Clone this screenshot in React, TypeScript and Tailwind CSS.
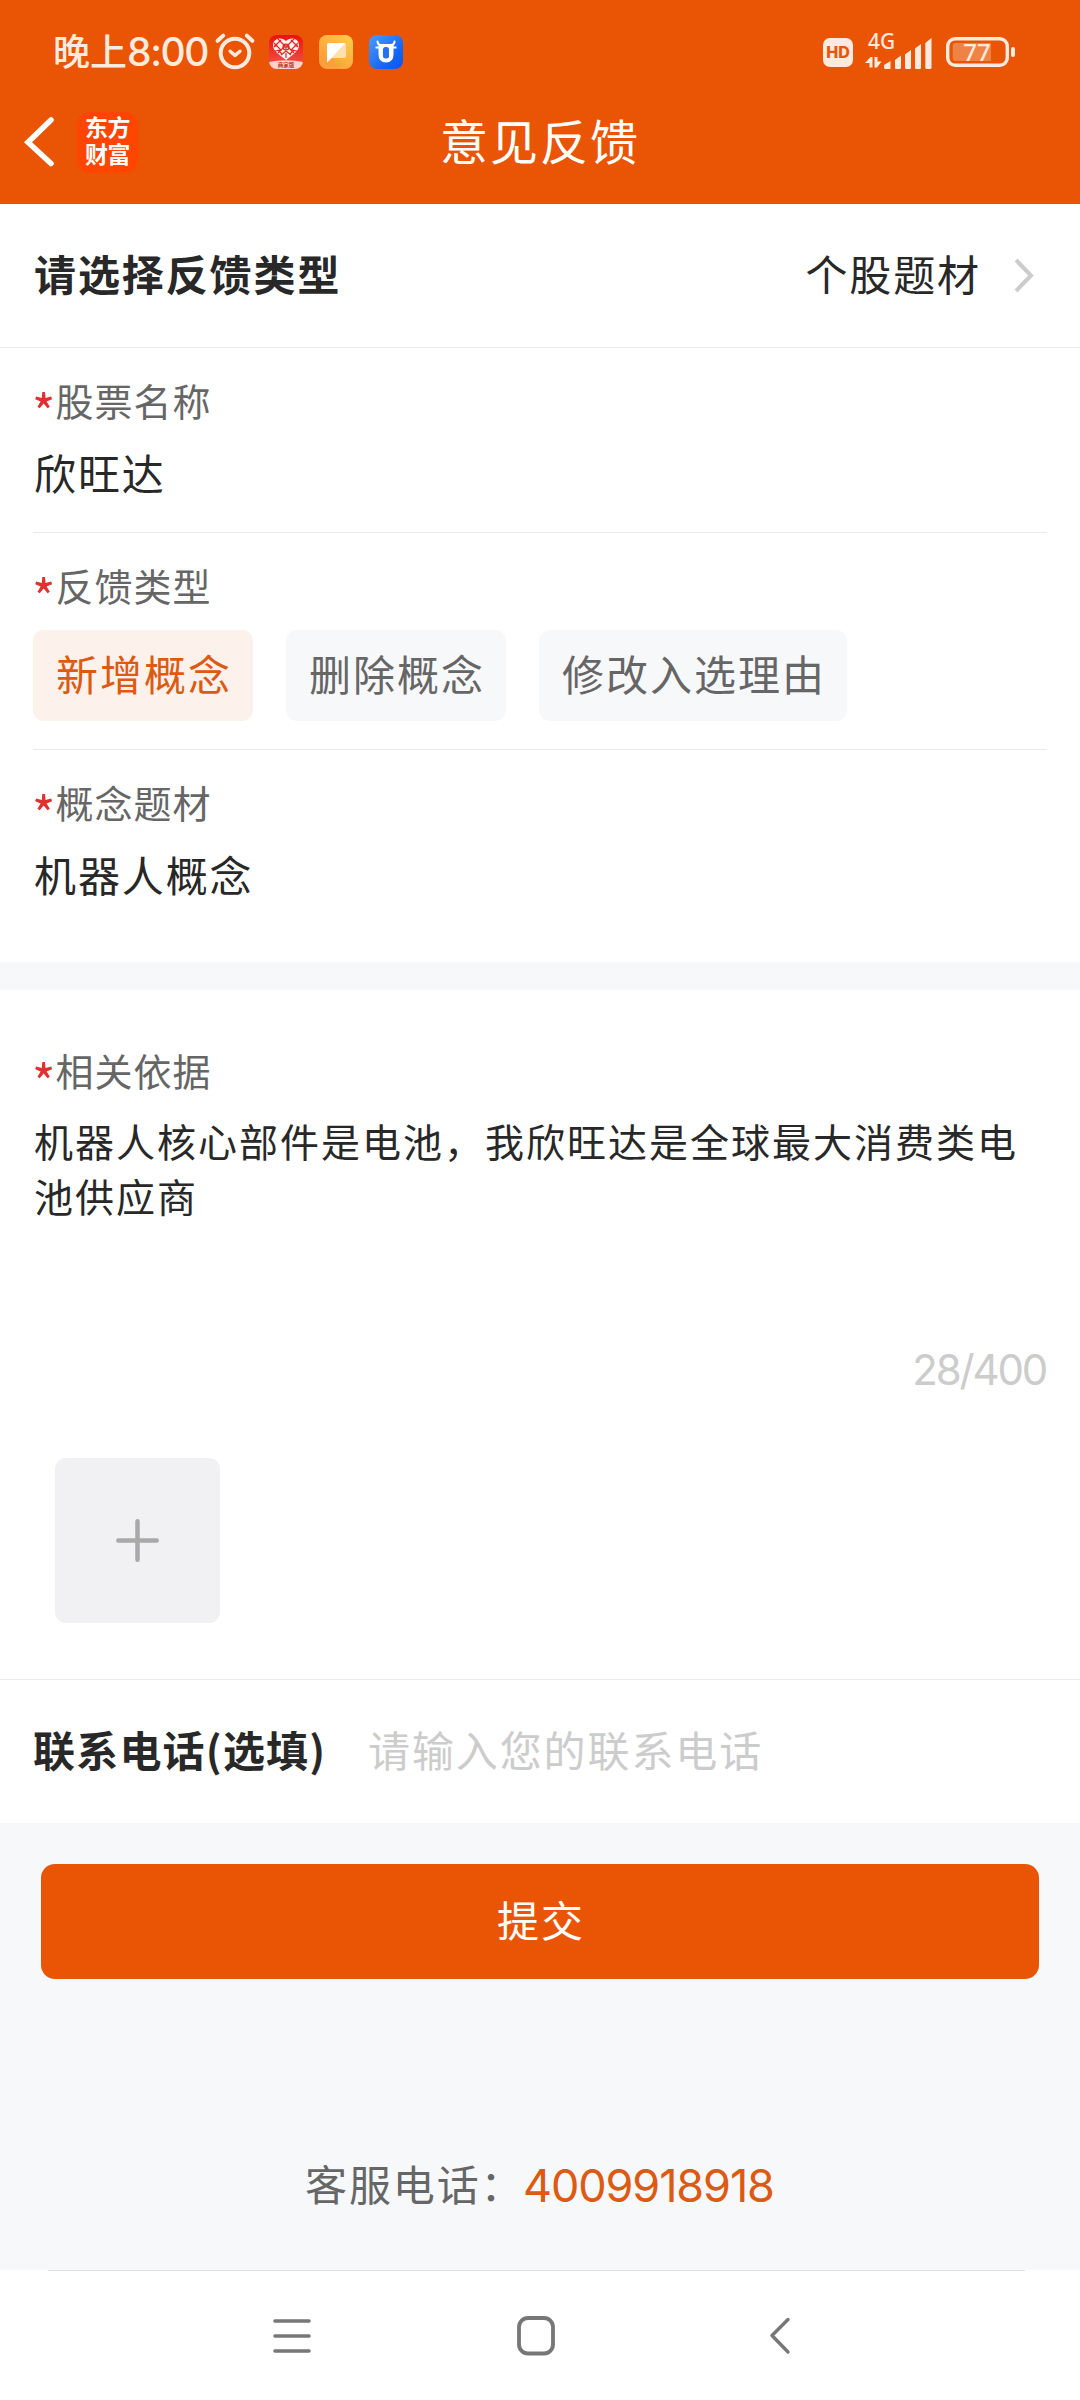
import React, { useState } from 'react';

const chips = ['新增概念', '删除概念', '修改入选理由'];

function AlarmIcon() {
  return (
    <svg width="42" height="40" viewBox="0 0 42 40" fill="none" stroke="#feeade" strokeWidth="4" strokeLinecap="round" strokeLinejoin="round">
      <circle cx="21" cy="21" r="14.3" />
      <path d="M3.6 8.8 L9.2 3.6 M38.4 8.8 L32.8 3.6" />
      <path d="M16.2 19.2 L21 23.4 L26 19.2" strokeWidth="3.4" />
    </svg>
  );
}

function HeartAppIcon() {
  return (
    <svg width="34" height="34" viewBox="0 0 34 34">
      <defs>
        <linearGradient id="heartBg" x1="0" y1="0" x2="0" y2="1">
          <stop offset="0" stopColor="#e8140c" />
          <stop offset="1" stopColor="#f4574d" />
        </linearGradient>
        <clipPath id="heartClip">
          <rect width="34" height="34" rx="8" />
        </clipPath>
      </defs>
      <g clipPath="url(#heartClip)">
        <rect width="34" height="34" fill="url(#heartBg)" />
        <path d="M0 27 Q17 23.500 34 27 V34 H0 Z" fill="#fbd3cc" />
        <path d="M17 6 C13 1.500 4 3 4 10.500 C4 16 11 20 17 25 C23 20 30 16 30 10.500 C30 3 21 1.500 17 6 Z" fill="#fff3f0" />
        <g fill="none" stroke="#e2261d" strokeWidth="1.2">
          <path d="M5 8 L12 15 L6 16 M9 4 L16 11 L9 18 M29 8 L22 15 L28 16 M25 4 L18 11 L25 18 M12 20 L17 16 L22 20 M9 11 H5 M25 11 H29" />
          <path d="M5 12 L12 5 M29 12 L22 5 M9 15 L13 19 M25 15 L21 19" />
          <circle cx="17" cy="12" r="3" />
          <path d="M14 12 H20 M17 9 V15 M17 18 V23" />
        </g>
      </g>
      <text x="17" y="32.300" textAnchor="middle" fontSize="5.500" fontWeight="700" fill="#b3372c" fontFamily="Noto Sans CJK SC, sans-serif">商家版</text>
    </svg>
  );
}

function NoteAppIcon() {
  return (
    <svg width="34" height="34" viewBox="0 0 34 34">
      <defs>
        <linearGradient id="noteBg" x1="1" y1="0" x2="0.3" y2="0.8">
          <stop offset="0" stopColor="#ffd04a" />
          <stop offset="1" stopColor="#ffa03a" />
        </linearGradient>
      </defs>
      <rect width="34" height="34" rx="8" fill="url(#noteBg)" />
      <path d="M8 10 Q8 8 10 8 H25 Q27 8 27 10 V21 Q27 23 25 23 H13 L8 27.500 Z" fill="#ffe0b0" />
      <path d="M8 10 Q8 8 10 8 H26.500 L8 27.500 Z" fill="#fff" />
    </svg>
  );
}

function BullAppIcon() {
  return (
    <svg width="34" height="34" viewBox="0 0 34 34">
      <defs>
        <linearGradient id="bullBg" x1="0" y1="0" x2="1" y2="1">
          <stop offset="0" stopColor="#4f9bfb" />
          <stop offset="0.700" stopColor="#1264f3" />
          <stop offset="1" stopColor="#0a55ea" />
        </linearGradient>
      </defs>
      <rect width="34" height="34" rx="8" fill="url(#bullBg)" />
      <path d="M8.500 6.500 Q8.500 9.500 11.500 10 M25.500 6.500 Q25.500 9.500 22.500 10" fill="none" stroke="#fff" strokeWidth="2" strokeLinecap="round" />
      <path d="M6.500 12.500 H12 M27.500 12.500 H22" stroke="#fff" strokeWidth="2" />
      <path d="M9.500 9 H24.500 V19 Q24.500 27.500 17 27.500 Q9.500 27.500 9.500 19 Z" fill="#fff" />
      <rect x="14" y="12" width="6" height="11.500" rx="2.500" fill="#2273f5" />
    </svg>
  );
}

function SignalIcon() {
  return (
    <svg className="overflow-visible" width="68" height="38" viewBox="0 0 68 38" fill="#feeade">
      <text x="3" y="15.500" fontSize="21" fontWeight="500" textLength="27" lengthAdjust="spacingAndGlyphs" fontFamily="Noto Sans, sans-serif">4G</text>
      <path d="M0 30 L5.500 24 H7.500 V34.500 H4.500 V30 Z M9.500 24 H12.500 V28.500 H16.500 L12 34.500 H9.500 Z" />
      <path d="M19 32 L25.500 28 V36 H20.500 Q19 36 19 34.500 Z" />
      <path d="M30 27 L36 22.500 V34.500 Q36 36 34.500 36 H31.500 Q30 36 30 34.500 Z" />
      <path d="M40 21.500 L46 17 V34.500 Q46 36 44.500 36 H41.500 Q40 36 40 34.500 Z" />
      <path d="M50 15.500 L56 11 V34.500 Q56 36 54.500 36 H51.500 Q50 36 50 34.500 Z" />
      <path d="M60.300 10 L66.500 5 V34.500 Q66.500 36 65 36 H61.800 Q60.300 36 60.300 34.500 Z" />
    </svg>
  );
}

function BatteryIcon() {
  return (
    <svg className="overflow-visible" width="70" height="30" viewBox="0 0 70 30">
      <rect x="1.700" y="1.700" width="59.600" height="26.600" rx="7.500" fill="none" stroke="#feeade" strokeWidth="3.400" />
      <rect x="65" y="10" width="4" height="10" rx="2" fill="#feeade" />
      <path d="M9.500 6 H45 V24 H9.500 Q6.700 24 6.700 21 V9 Q6.700 6 9.500 6 Z" fill="#feeade" fillOpacity="0.3" />
      <text x="31" y="23.700" textAnchor="middle" fontSize="24" fontWeight="500" fill="#feeade" fontFamily="Noto Sans, sans-serif">77</text>
    </svg>
  );
}

function StatusBar() {
  return (
    <div className="flex h-[104px] items-center justify-between pl-[53px] pr-[64px] tracking-normal text-[#feeade]">
      <div className="flex items-center">
        <div className="flex h-[52px] items-center pb-[4px] font-medium leading-[52px]">
          <span className="text-[37px]">晚上</span>
          <span className="relative top-[2px] w-[86px] font-['Inter',sans-serif] text-[39px] tracking-[-1.4px]">8:00</span>
        </div>
        <div className="ml-px mr-[13px]">
          <AlarmIcon />
        </div>
        <div className="flex gap-4">
          <HeartAppIcon />
          <NoteAppIcon />
          <BullAppIcon />
        </div>
      </div>
      <div className="flex items-center">
        <div className="flex h-[29px] w-[30px] items-center justify-center rounded-[7px] bg-[#feeade] font-['Inter',sans-serif] text-[16px] font-extrabold leading-none text-[#e95504]">
          HD
        </div>
        <div className="ml-[12px] mr-[13px]">
          <SignalIcon />
        </div>
        <BatteryIcon />
      </div>
    </div>
  );
}

function TitleBar() {
  return (
    <div className="grid h-[76px] grid-cols-[1fr_auto_1fr] items-center">
      <div className="flex items-center gap-[22px] pl-[24px]">
        <svg width="31" height="52" viewBox="0 0 31 52" fill="none" stroke="#fff" strokeWidth="5.5" strokeLinecap="round">
          <path d="M27 4 L4 26.300 L27 47.500" />
        </svg>
        <div className="flex h-[61px] w-[61px] items-center justify-center rounded-[13px] bg-[#ff4500] pb-[4px] text-[23px] font-bold leading-[27px] tracking-[-0.5px] text-white">
          <p>东方<br />财富</p>
        </div>
      </div>
      <h1 className="pb-[6px] text-[48px] leading-[60px] tracking-[2px] text-white">意见反馈</h1>
    </div>
  );
}

function Label({ children }: { children: React.ReactNode }) {
  return (
    <div className="flex h-[56px] text-[38px] leading-[56px] tracking-[1px] text-[#666]">
      <span className="relative -left-px top-[10px] w-[22.500px] text-[50px] tracking-normal text-[#e03030]">*</span>
      {children}
    </div>
  );
}

export default function App() {
  const [selected, setSelected] = useState(0);

  return (
    <div className="flex h-[2400px] w-[1080px] flex-col overflow-hidden bg-[#f7f8fa] font-['Noto_Sans_CJK_SC',sans-serif] text-[42px] tracking-[1.9px] text-[#282828]">
      <header className="h-[204px] shrink-0 bg-[#e95504]">
        <StatusBar />
        <TitleBar />
      </header>

      <div className="flex h-[144px] items-center justify-between border-b border-[#ebebeb] bg-white pb-[7px] pl-[34px] pr-[45px]">
        <span className="font-bold">请选择反馈类型</span>
        <div className="flex items-center">
          <span>个股题材</span>
          <svg className="relative top-[4px] ml-[32px]" width="22" height="38" viewBox="0 0 22 38" fill="none" stroke="#ccc" strokeWidth="4">
            <path d="M3 3 L18 18.500 L3 34" />
          </svg>
        </div>
      </div>

      <section className="bg-white px-[33px]">
        <div className="h-[185px] border-b border-[#ebebeb] pt-[24px]">
          <Label>股票名称</Label>
          <div className="mt-[14px] pl-px leading-[60px]">欣旺达</div>
        </div>
        <div className="h-[217px] border-b border-[#ebebeb] pt-[24px]">
          <Label>反馈类型</Label>
          <div className="mt-[17px] flex gap-[33px]">
            {chips.map((chip, i) => (
              <button
                key={chip}
                onClick={() => setSelected(i)}
                className={`h-[91px] rounded-[11px] pb-[7px] pl-[23px] pr-[21px] tracking-[2px] ${
                  i === selected ? 'bg-[#fdf1eb] text-[#dc5a12]' : 'bg-[#f7f8fa] text-[#666]'
                }`}
              >
                {chip}
              </button>
            ))}
          </div>
        </div>
        <div className="h-[212px] pt-[24px]">
          <Label>概念题材</Label>
          <div className="mt-[14px] pl-px leading-[60px]">机器人概念</div>
        </div>
      </section>

      <section className="mt-[28px] h-[690px] border-b border-[#ebebeb] bg-white px-[33px] pt-[52px]">
        <Label>相关依据</Label>
        <p className="mt-[15px] h-[225px] pl-px text-[39px] leading-[55px] tracking-[2px]">
          机器人核心部件是电池，我欣旺达是全球最大消费类电池供应商
        </p>
        <div className="pr-px text-right font-['Inter',sans-serif] text-[42px] leading-[64px] tracking-[-2.2px] text-[#ccc]">28/400</div>
        <button className="ml-[22px] mt-[56px] flex h-[165px] w-[165px] items-center justify-center rounded-[11px] bg-[#f1f1f3]">
          <svg width="44" height="44" viewBox="0 0 44 44" stroke="#a9a9a9" strokeWidth="4.500" strokeLinecap="round">
            <path d="M21.500 2.300 V40.700 M2.300 21.500 H40.700" />
          </svg>
        </button>
      </section>

      <div className="flex h-[143px] items-center bg-white pb-[7px] pl-[33px]">
        <span className="w-[335px] font-bold tracking-[1.2px]">联系电话(选填)</span>
        <span className="text-[#ccc]">请输入您的联系电话</span>
      </div>

      <button className="mx-[41px] mt-[41px] h-[115px] rounded-[14px] bg-[#e95504] pb-[6px] pl-[2px] text-white">提交</button>

      <div className="mt-[174px] flex h-[60px] pl-[305px] leading-[60px] text-[#666]">
        <span className="w-[218px] whitespace-nowrap">客服电话：</span>
        <span className="relative top-[3px] font-['Inter',sans-serif] text-[45px] tracking-[-1.1px] text-[#dc5a12]">4009918918</span>
      </div>

      <nav className="mt-[57px] h-[130px] bg-white">
        <div className="ml-[48px] mr-[55px] h-px bg-[#e4e4e4]" />
        <div className="ml-[170px] grid h-[129px] w-[732px] grid-cols-3 items-center justify-items-center">
          <svg width="38" height="40" viewBox="0 0 38 40" stroke="#777" strokeWidth="3.600" strokeLinecap="round">
            <path d="M2 5 H36 M2 20 H36 M2 35 H36" />
          </svg>
          <svg width="38" height="40" viewBox="0 0 38 40" fill="none" stroke="#777" strokeWidth="3.800">
            <rect x="2" y="2" width="34" height="35.500" rx="9" />
          </svg>
          <svg width="38" height="40" viewBox="0 0 38 40" fill="none" stroke="#777" strokeWidth="3.400" strokeLinecap="round" strokeLinejoin="round">
            <path d="M27 3.500 L11 19.500 L27 36" />
          </svg>
        </div>
      </nav>
    </div>
  );
}
